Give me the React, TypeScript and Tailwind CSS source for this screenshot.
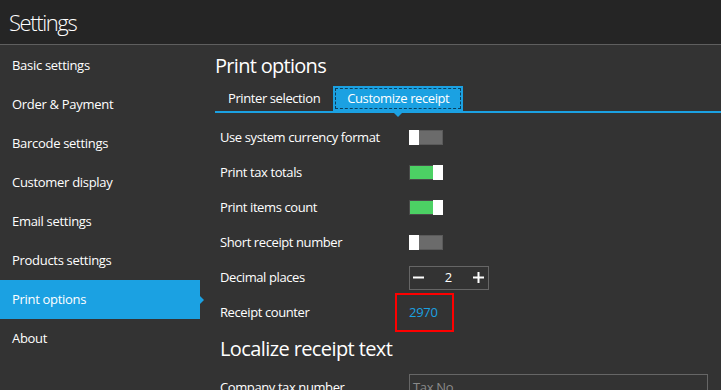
import React from 'react';

const font = { fontFamily: '"Open Sans", "Noto Sans", sans-serif' };

const navItems = [
  'Basic settings',
  'Order & Payment',
  'Barcode settings',
  'Customer display',
  'Email settings',
  'Products settings',
  'Print options',
  'About',
];

function Toggle({ on }: { on: boolean }) {
  return (
    <div
      className={`relative w-[34px] h-[15px] border ${
        on ? 'border-[#4a4a4a] bg-[#4cd164]' : 'border-[#5a5a5a] bg-[#6b6b6b]'
      }`}
    >
      <div
        className={`absolute top-[-1px] w-[10px] h-[15px] bg-white ${on ? 'right-[-1px]' : 'left-[-1px]'}`}
      />
    </div>
  );
}

function Row({ label, children }: { label: string; children: React.ReactNode }) {
  return (
    <div className="flex items-center h-[35px]">
      <div className="w-[189px] text-[13px] tracking-[-0.4px] text-white">{label}</div>
      {children}
    </div>
  );
}

export default function App() {
  return (
    <div className="w-[721px] h-[390px] overflow-hidden bg-[#333333] flex flex-col" style={font}>
      {/* Top bar */}
      <div className="h-[45px] shrink-0 bg-[#252525] border-b border-[#5f5f5f] flex items-center pl-[9px]">
        <span className="text-[22px] font-light tracking-[-1.4px] text-white leading-none">Settings</span>
      </div>

      <div className="flex flex-1 min-h-0">
        {/* Sidebar */}
        <div className="w-[200px] shrink-0 pt-[1px]">
          {navItems.map((item) => {
            const active = item === 'Print options';
            return (
              <div
                key={item}
                className={`relative h-[39px] flex items-center pl-[12px] text-[13px] tracking-[-0.3px] text-white ${
                  active ? 'bg-[#1ba1e2]' : ''
                }`}
              >
                {item}
                {active && (
                  <div className="absolute right-[-4px] top-1/2 -translate-y-1/2 w-0 h-0 border-y-[4px] border-y-transparent border-l-[4px] border-l-[#1ba1e2]" />
                )}
              </div>
            );
          })}
        </div>

        {/* Content */}
        <div className="flex-1 min-w-0 pl-[15px]">
          <div className="text-[20px] tracking-[-0.7px] text-white leading-none mt-[11px]">Print options</div>

          {/* Tabs */}
          <div className="flex mt-[10px] border-b-2 border-[#1ba1e2] h-[27px]">
            <div className="px-[13px] flex items-center text-[13px] tracking-[-0.4px] text-white">Printer selection</div>
            <div className="relative bg-[#1ba1e2] p-[2px]">
              <div className="h-full px-[11px] flex items-center border border-dashed border-[#0b3f5c] text-[13px] tracking-[-0.4px] text-white">
                Customize receipt
              </div>
              <div className="absolute left-1/2 -translate-x-1/2 bottom-[-6px] w-0 h-0 border-x-[4px] border-x-transparent border-t-[4px] border-t-[#1ba1e2]" />
            </div>
          </div>

          <div className="pl-[5px] pt-[7px]">
            <Row label="Use system currency format">
              <Toggle on={false} />
            </Row>
            <Row label="Print tax totals">
              <Toggle on />
            </Row>
            <Row label="Print items count">
              <Toggle on />
            </Row>
            <Row label="Short receipt number">
              <Toggle on={false} />
            </Row>
            <Row label="Decimal places">
              <div className="w-[80px] h-[24px] border border-[#666666] flex items-center justify-between pl-[3px] pr-[4px] text-white">
                <svg width="11" height="11" viewBox="0 0 11 11">
                  <rect x="0" y="4.5" width="11" height="2" fill="white" />
                </svg>
                <span className="text-[13px]">2</span>
                <svg width="11" height="11" viewBox="0 0 11 11">
                  <rect x="0" y="4.5" width="11" height="2" fill="white" />
                  <rect x="4.5" y="0" width="2" height="11" fill="white" />
                </svg>
              </div>
            </Row>
            <Row label="Receipt counter">
              <div className="-ml-[14px] w-[59px] h-[39px] border-2 border-[#ff0000] flex items-center pl-[12px]">
                <span className="text-[13px] tracking-[-0.3px] text-[#1ba1e2]">2970</span>
              </div>
            </Row>

            <div className="text-[20px] tracking-[-0.6px] text-white leading-none mt-[9px]">Localize receipt text</div>

            <div className="flex items-start mt-[15px]">
              <div className="w-[189px] text-[13px] tracking-[-0.4px] text-white pt-[4px]">Company tax number</div>
              <div className="w-[299px] h-[30px] border border-[#666666] px-[3px] pt-[3px] text-[13px] tracking-[-0.3px] text-[#8a8a8a]">
                Tax No.
              </div>
            </div>
          </div>
        </div>
      </div>
    </div>
  );
}
